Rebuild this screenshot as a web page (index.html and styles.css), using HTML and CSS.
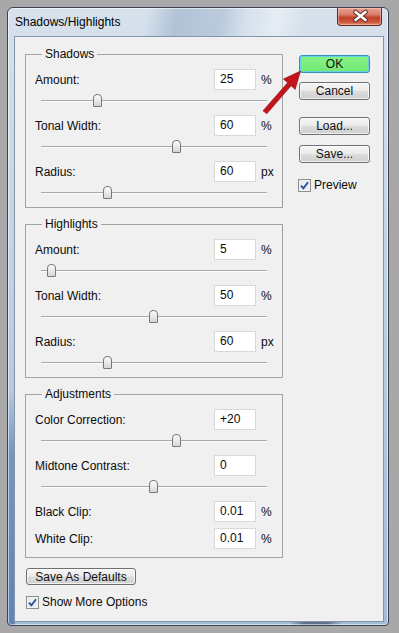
FILE: index.html
```html
<!DOCTYPE html>
<html lang="en">
<head>
    <meta charset="UTF-8">
    <meta name="viewport" content="width=device-width, initial-scale=1.0">
    <title>Shadows/Highlights</title>
    <link rel="stylesheet" href="styles.css">
</head>
<body>
<div class="window">
  <div class="titlebar">
    <span class="title">Shadows/Highlights</span>
    <div class="close">
      <svg width="45" height="18" viewBox="0 0 45 18">
        <path d="M17.5 5 L27.5 13 M27.5 5 L17.5 13" stroke="#5b2a24" stroke-width="4.6" stroke-linecap="round"/>
        <path d="M17.5 5 L27.5 13 M27.5 5 L17.5 13" stroke="#fff" stroke-width="2.6" stroke-linecap="round"/>
      </svg>
    </div>
  </div>

  <div class="client">
    <div class="left">
      <fieldset class="group">
        <legend>Shadows</legend>
        <div class="row"><span class="label">Amount:</span><span class="input">25</span><span class="unit">%</span></div>
        <div class="slider"><div class="track"><div class="thumb" style="left:25%"></div></div></div>
        <div class="row"><span class="label">Tonal Width:</span><span class="input">60</span><span class="unit">%</span></div>
        <div class="slider"><div class="track"><div class="thumb" style="left:60%"></div></div></div>
        <div class="row"><span class="label">Radius:</span><span class="input">60</span><span class="unit">px</span></div>
        <div class="slider"><div class="track"><div class="thumb" style="left:29.6%"></div></div></div>
      </fieldset>

      <fieldset class="group">
        <legend>Highlights</legend>
        <div class="row"><span class="label">Amount:</span><span class="input">5</span><span class="unit">%</span></div>
        <div class="slider"><div class="track"><div class="thumb" style="left:5%"></div></div></div>
        <div class="row"><span class="label">Tonal Width:</span><span class="input">50</span><span class="unit">%</span></div>
        <div class="slider"><div class="track"><div class="thumb" style="left:50%"></div></div></div>
        <div class="row"><span class="label">Radius:</span><span class="input">60</span><span class="unit">px</span></div>
        <div class="slider"><div class="track"><div class="thumb" style="left:29.6%"></div></div></div>
      </fieldset>

      <fieldset class="group adjust">
        <legend>Adjustments</legend>
        <div class="row"><span class="label">Color Correction:</span><span class="input">+20</span><span class="unit"></span></div>
        <div class="slider"><div class="track"><div class="thumb" style="left:60%"></div></div></div>
        <div class="row"><span class="label">Midtone Contrast:</span><span class="input">0</span><span class="unit"></span></div>
        <div class="slider"><div class="track"><div class="thumb" style="left:50%"></div></div></div>
        <div class="row clip"><span class="label">Black Clip:</span><span class="input">0.01</span><span class="unit">%</span></div>
        <div class="row clip"><span class="label">White Clip:</span><span class="input">0.01</span><span class="unit">%</span></div>
      </fieldset>

      <button class="btn defaults">Save As Defaults</button>
      <label class="check more">
        <svg class="box" width="13" height="13" viewBox="0 0 13 13">
          <rect x="0.5" y="0.5" width="12" height="12" fill="#f4f4f4" stroke="#8e8f8f"/>
          <rect x="1.5" y="1.5" width="10" height="10" fill="#e9eef4"/>
          <path d="M3 6.6 L5.4 9.4 L10 3.2" fill="none" stroke="#2b4d94" stroke-width="1.8"/>
        </svg>
        <span>Show More Options</span>
      </label>
    </div>

    <div class="right">
      <button class="btn ok">OK</button>
      <button class="btn cancel">Cancel</button>
      <button class="btn load">Load...</button>
      <button class="btn save">Save...</button>
      <label class="check preview">
        <svg class="box" width="13" height="13" viewBox="0 0 13 13">
          <rect x="0.5" y="0.5" width="12" height="12" fill="#f4f4f4" stroke="#8e8f8f"/>
          <rect x="1.5" y="1.5" width="10" height="10" fill="#e9eef4"/>
          <path d="M3 6.6 L5.4 9.4 L10 3.2" fill="none" stroke="#2b4d94" stroke-width="1.8"/>
        </svg>
        <span>Preview</span>
      </label>
    </div>

    <!-- red arrow pointing at OK -->
    <svg class="arrow" width="65" height="60" viewBox="245 60 65 60">
      <path d="M263 110.8 L287.6 82.7 L283.4 79 L300.5 71 L295.2 89.5 L291.1 85.8 L266.8 113.8 Z"
            fill="#c3141c" stroke="#8a0c12" stroke-width="0.6" stroke-linejoin="round"/>
    </svg>
  </div>
</div>
</body>
</html>
```

FILE: styles.css
```css
body {
    margin: 0;
    background: #a8a8a8;
    font-family: "Liberation Sans", Arial, sans-serif;
    font-size: 12px;
    color: #0c0c0c;
}

.window {
    box-sizing: border-box;
    width: 382px;
    height: 619px;
    margin: 7px 0 0 7px;
    padding: 0 4px 3px 6px;
    display: flex;
    flex-direction: column;
    border: 1px solid #3b4350;
    border-radius: 6px 6px 4px 4px;
    box-shadow: inset 0 0 0 1px rgba(255, 255, 255, 0.55);
    background:
        linear-gradient(180deg, rgba(80, 120, 175, 0) 62%, rgba(80, 120, 175, 0.6) 72%, rgba(70, 110, 170, 0.7) 97%) left top / 7px 100% no-repeat,
        linear-gradient(90deg, rgba(40, 60, 90, 0) 74%, rgba(40, 60, 90, 0.6) 78%, rgba(40, 60, 90, 0.6) 84%, rgba(40, 60, 90, 0) 88%) left bottom / 100% 4px no-repeat,
        linear-gradient(100deg, rgba(255, 255, 255, 0) 36%, rgba(110, 140, 175, 0.35) 44%, rgba(110, 140, 175, 0.25) 56%, rgba(255, 255, 255, 0) 62%, rgba(255, 255, 255, 0.4) 70%, rgba(255, 255, 255, 0) 78%) left top / 100% 36px no-repeat,
        linear-gradient(180deg, #d6e1ec 0%, #c3d3e4 40%, #aec4dc 75%, #a3bcd8 100%);
}

.titlebar {
    height: 28px;
    display: flex;
    justify-content: space-between;
    align-items: flex-start;
}

.title {
    margin-left: 1px;
    line-height: 28px;
    color: #000;
}

.close {
    width: 45px;
    height: 18px;
    margin-right: 2px;
    box-sizing: border-box;
    border: 1px solid #5e2a22;
    border-top: none;
    border-radius: 0 0 4px 4px;
    background: linear-gradient(180deg, #e9a596 0%, #d97a66 40%, #c0432d 55%, #c9533b 80%, #dd8a6c 100%);
    box-shadow: inset 0 0 0 1px rgba(255, 220, 210, 0.45);
}

.close svg {
    display: block;
    margin-top: -1px;
}

.client {
    flex: 1;
    position: relative;
    display: flex;
    padding: 9px 0 0 10px;
    border: 1px solid #8494a9;
    background: #f0f0f0;
}

.left {
    width: 258px;
}

.right {
    width: 71px;
    margin-left: 16px;
    padding-top: 9px;
    display: flex;
    flex-direction: column;
}

/* group boxes */
.group {
    box-sizing: border-box;
    width: 258px;
    min-inline-size: 0;
    margin: 0;
    padding: 7px 0 0;
    border: 1px solid #a3a3a3;
}

.group + .group {
    margin-top: 8px;
}

.group legend {
    margin-left: 16px;
    padding: 0 3px;
    line-height: 16px;
}

.adjust {
    padding-bottom: 8px;
}

.row {
    display: flex;
    align-items: center;
    height: 21px;
    padding-left: 9px;
}

.clip + .clip {
    margin-top: 6px;
}

.label {
    flex: 1;
}

.input {
    box-sizing: border-box;
    width: 42px;
    height: 21px;
    padding-left: 5px;
    line-height: 19px;
    background: #fff;
    border: 1px solid #d8d8d8;
}

.unit {
    box-sizing: border-box;
    width: 26px;
    padding-left: 5px;
}

/* sliders */
.slider {
    box-sizing: border-box;
    height: 25px;
    padding: 10px 15px 0;
}

.track {
    position: relative;
    height: 1px;
    background: #a9a9a9;
    border-bottom: 1px solid #fdfdfd;
}

.thumb {
    position: absolute;
    top: -6px;
    width: 9px;
    height: 13px;
    margin-left: -5px;
    box-sizing: border-box;
    border: 1px solid #777;
    border-radius: 4px 4px 1px 1px;
    background: linear-gradient(180deg, #fdfdfd, #d6d6d6);
}

/* buttons */
.btn {
    box-sizing: border-box;
    height: 18px;
    padding: 0;
    font: inherit;
    line-height: 16px;
    color: #111;
    text-align: center;
    border: 1px solid #707070;
    border-radius: 3px;
    background: linear-gradient(180deg, #f6f6f6 0%, #ebebeb 48%, #dcdcdc 52%, #cfcfcf 100%);
    box-shadow: inset 0 0 0 1px rgba(255, 255, 255, 0.7);
}

.ok {
    border-color: #3c8dbf;
    background: linear-gradient(180deg, #88f288, #72e872);
    box-shadow: inset 0 0 0 1px #64d2e4;
}

.cancel {
    margin-top: 9px;
}

.load {
    margin-top: 17px;
}

.save {
    margin-top: 10px;
}

.defaults {
    width: 110px;
    height: 17px;
    margin: 10px 0 0 1px;
}

.check {
    display: flex;
    align-items: center;
    gap: 3px;
    height: 16px;
}

.check .box {
    display: block;
}

.more {
    margin: 9px 0 0 1px;
}

.preview {
    margin: 14px 0 0 -1px;
}

.arrow {
    position: absolute;
    left: 230px;
    top: 23px;
}
```
